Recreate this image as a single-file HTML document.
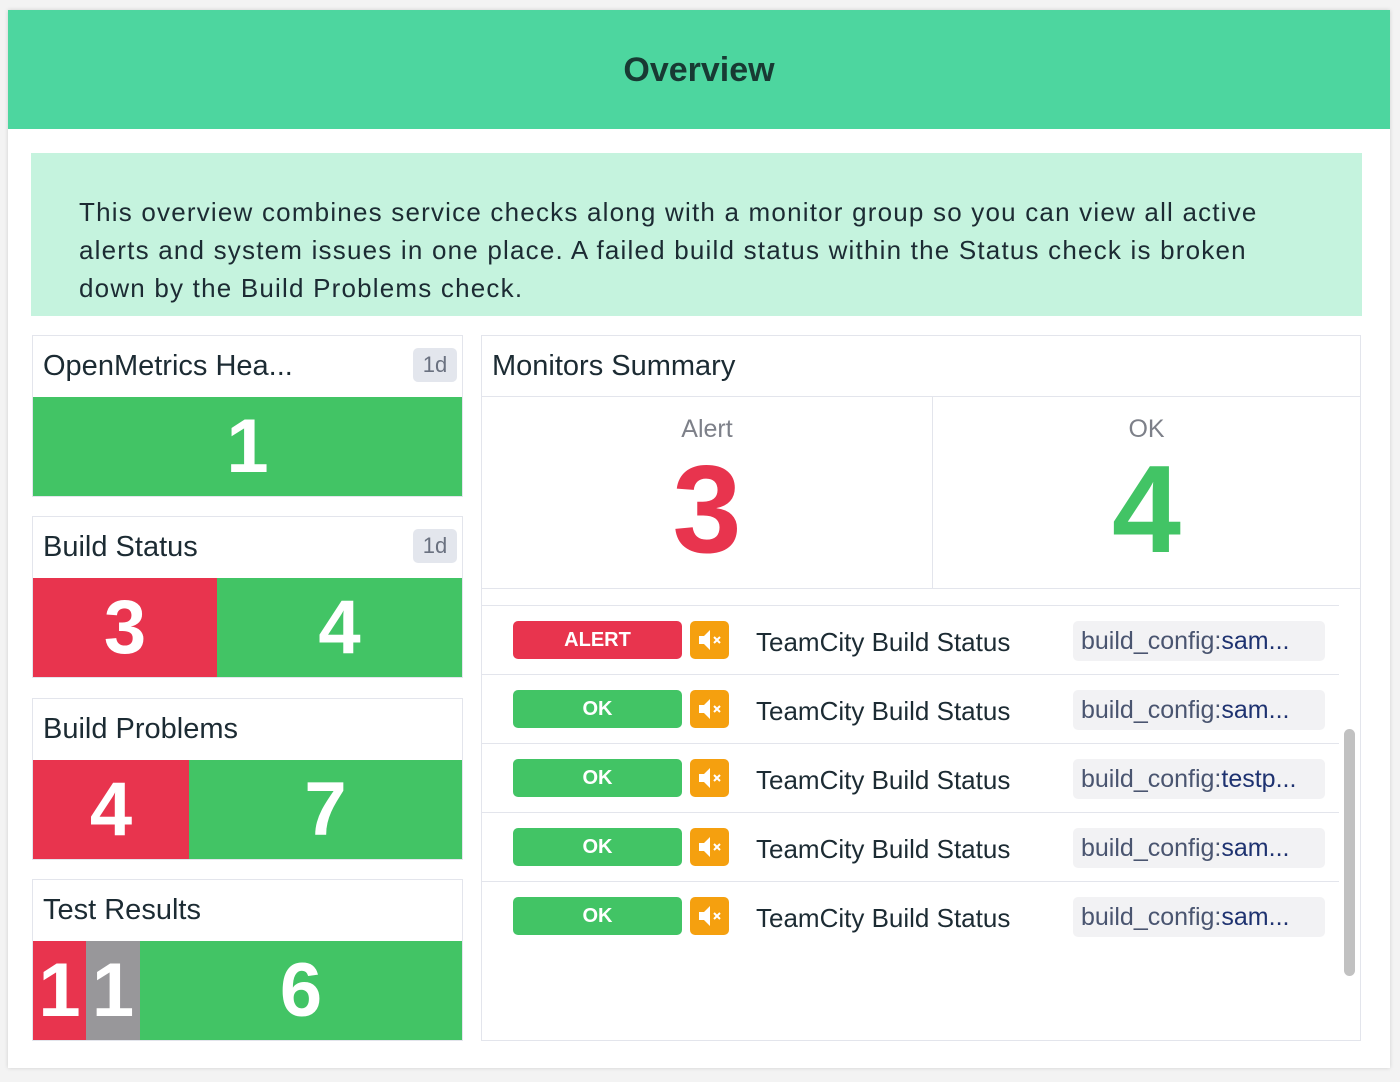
<!DOCTYPE html>
<html><head><meta charset="utf-8"><style>
*{box-sizing:border-box;margin:0;padding:0}
body{width:1400px;height:1082px;background:#f3f3f3;font-family:"Liberation Sans","DejaVu Sans",sans-serif;position:relative;overflow:hidden}
.card{position:absolute;left:8px;top:10px;width:1382px;height:1058px;background:#fff;box-shadow:0 0 4px rgba(0,0,0,.15)}
.hdr{position:absolute;left:0;top:0;width:1382px;height:119px;background:#4dd69f;text-align:center;line-height:121px;font-size:34px;font-weight:bold;color:#183a33}
.info{position:absolute;left:23px;top:143px;width:1331px;height:163px;background:#c5f3de;padding:40px 0 0 48px;font-size:26px;line-height:38px;color:#1c2b33;letter-spacing:1.2px;white-space:nowrap}
.w{position:absolute;left:24px;width:431px;height:162px;border:1px solid #e3e5ec;background:#fff}
.w .t{height:61px;line-height:60px;padding-left:10px;font-size:29px;color:#1c2b33;position:relative}
.w .d{position:absolute;right:5px;top:12px;width:44px;height:34px;background:#e3e6ed;border-radius:5px;font-size:22px;line-height:34px;text-align:center;color:#6a7180}
.w .b{position:absolute;top:61px;left:0;right:0;bottom:0;display:flex}
.w .b div{color:#fff;font-weight:bold;font-size:76px;display:flex;align-items:center;justify-content:center}
.R{background:#e8344e}.G{background:#42c465}.Y{background:#98979a}
.ms{position:absolute;left:473px;top:325px;width:880px;height:706px;border:1px solid #e3e5ec}
.ms .t{height:61px;line-height:60px;padding-left:10px;font-size:29px;color:#1c2b33;border-bottom:1px solid #e3e5ec}
.col{position:absolute;top:61px;height:192px;text-align:center;border-bottom:1px solid #e3e5ec}
.col .l{font-size:25px;color:#7d8089;margin-top:18px}
.col .n{font-size:124px;font-weight:bold;line-height:120px;margin-top:6px}
.row{position:absolute;left:0;width:857px;height:69px;border-top:1px solid #e3e5ec}
.bd{position:absolute;left:31px;top:15px;width:169px;height:38px;border-radius:5px;color:#fff;font-weight:bold;font-size:20px;text-align:center;line-height:38px}
.mu{position:absolute;left:208px;top:15px;width:39px;height:38px;border-radius:5px;background:#f5a00f}
.nm{position:absolute;left:274px;top:0;line-height:72px;font-size:26px;color:#1c2b33}
.tg{position:absolute;left:591px;top:15px;width:252px;height:40px;border-radius:5px;background:#f2f2f4;font-size:25px;line-height:40px;padding-left:8px;color:#4a5570}
.tg span{color:#1e3270}
.sb{position:absolute;left:862px;top:393px;width:11px;height:247px;border-radius:6px;background:#c1c1c1}
</style></head><body>
<div class="card">
<div class="hdr">Overview</div>
<div class="info">This overview combines service checks along with a monitor group so you can view all active<br>alerts and system issues in one place. A failed build status within the Status check is broken<br>down by the Build Problems check.</div>
<div class="w" style="top:325px"><div class="t">OpenMetrics Hea...<span class="d">1d</span></div><div class="b"><div class="G" style="width:100%">1</div></div></div>
<div class="w" style="top:506px"><div class="t">Build Status<span class="d">1d</span></div><div class="b"><div class="R" style="width:184px">3</div><div class="G" style="flex:1">4</div></div></div>
<div class="w" style="top:688px"><div class="t">Build Problems</div><div class="b"><div class="R" style="width:156px">4</div><div class="G" style="flex:1">7</div></div></div>
<div class="w" style="top:869px"><div class="t">Test Results</div><div class="b"><div class="R" style="width:53px">1</div><div class="Y" style="width:54px">1</div><div class="G" style="flex:1">6</div></div></div>
<div class="ms">
<div class="t">Monitors Summary</div>
<div class="col" style="left:0;width:451px;border-right:1px solid #e3e5ec"><div class="l">Alert</div><div class="n" style="color:#e8344e">3</div></div>
<div class="col" style="left:451px;width:427px"><div class="l">OK</div><div class="n" style="color:#42c465">4</div></div>
<div class="row" style="top:269px"><div class="bd R">ALERT</div><div class="mu"><svg width="39" height="38" viewBox="0 0 39 38"><path d="M9 15h5l6-6v20l-6-6H9z" fill="#fff"/><path d="M24 16l6 6M30 16l-6 6" stroke="#fff" stroke-width="2"/></svg></div><div class="nm">TeamCity Build Status</div><div class="tg">build_config:<span>sam...</span></div></div>
<div class="row" style="top:338px"><div class="bd G">OK</div><div class="mu"><svg width="39" height="38" viewBox="0 0 39 38"><path d="M9 15h5l6-6v20l-6-6H9z" fill="#fff"/><path d="M24 16l6 6M30 16l-6 6" stroke="#fff" stroke-width="2"/></svg></div><div class="nm">TeamCity Build Status</div><div class="tg">build_config:<span>sam...</span></div></div>
<div class="row" style="top:407px"><div class="bd G">OK</div><div class="mu"><svg width="39" height="38" viewBox="0 0 39 38"><path d="M9 15h5l6-6v20l-6-6H9z" fill="#fff"/><path d="M24 16l6 6M30 16l-6 6" stroke="#fff" stroke-width="2"/></svg></div><div class="nm">TeamCity Build Status</div><div class="tg">build_config:<span>testp...</span></div></div>
<div class="row" style="top:476px"><div class="bd G">OK</div><div class="mu"><svg width="39" height="38" viewBox="0 0 39 38"><path d="M9 15h5l6-6v20l-6-6H9z" fill="#fff"/><path d="M24 16l6 6M30 16l-6 6" stroke="#fff" stroke-width="2"/></svg></div><div class="nm">TeamCity Build Status</div><div class="tg">build_config:<span>sam...</span></div></div>
<div class="row" style="top:545px"><div class="bd G">OK</div><div class="mu"><svg width="39" height="38" viewBox="0 0 39 38"><path d="M9 15h5l6-6v20l-6-6H9z" fill="#fff"/><path d="M24 16l6 6M30 16l-6 6" stroke="#fff" stroke-width="2"/></svg></div><div class="nm">TeamCity Build Status</div><div class="tg">build_config:<span>sam...</span></div></div>
<div class="sb"></div>
</div>
</div>
</body></html>
